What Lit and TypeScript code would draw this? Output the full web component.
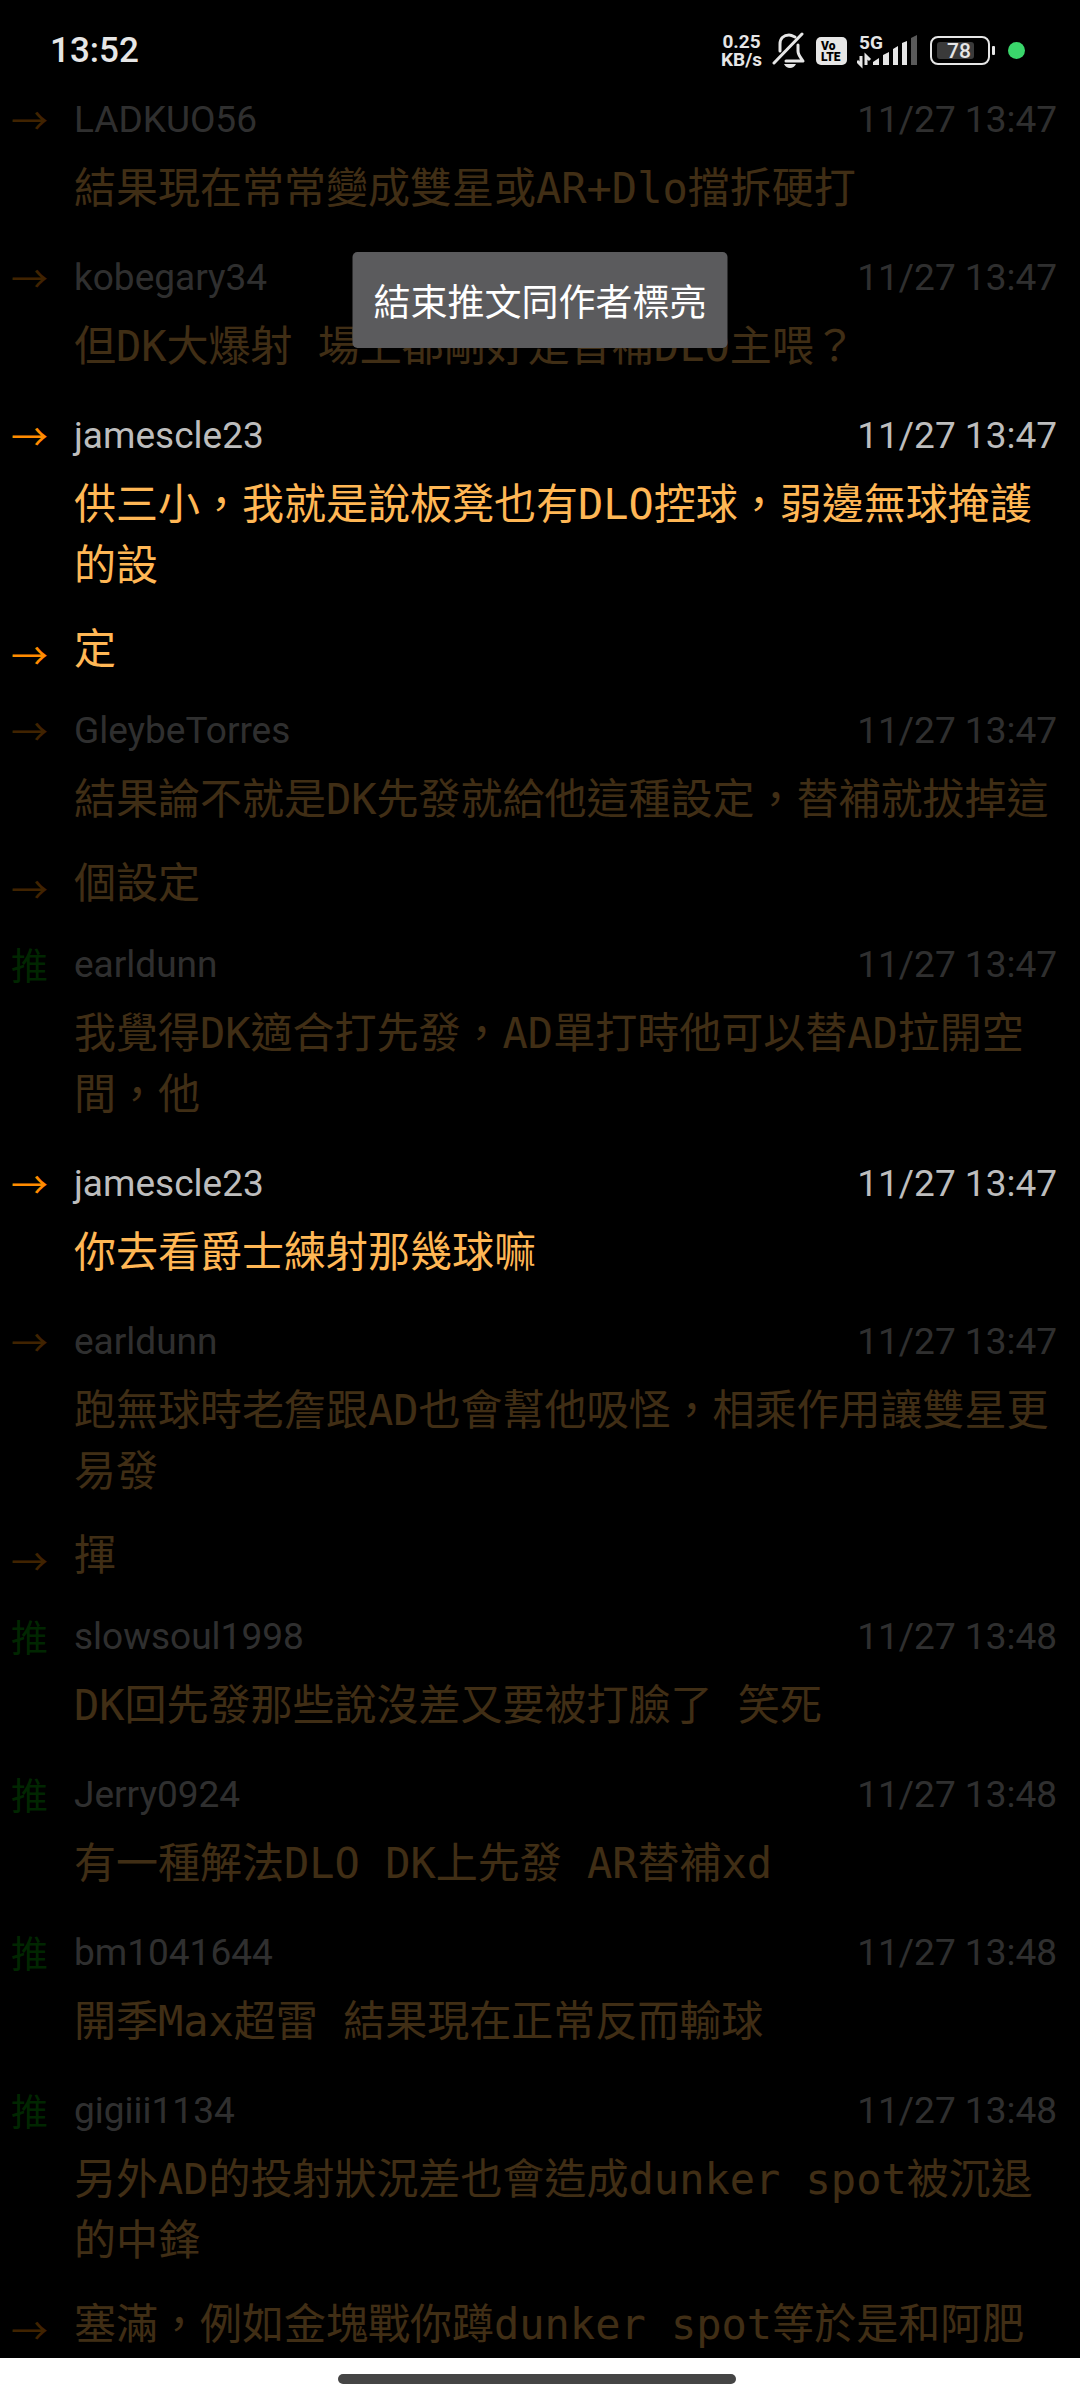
import { LitElement, html, svg, css, nothing } from "lit";
import { customElement, property } from "lit/decorators.js";
import { classMap } from "lit/directives/class-map.js";

type Kind = "reply" | "push";

interface Comment {
  kind: Kind;
  text: string;
  author?: string;
  time?: string;
  highlighted?: boolean;
}

const COMMENTS: Comment[] = [
  { kind: "reply", author: "LADKUO56", time: "11/27 13:47", text: "結果現在常常變成雙星或AR+Dlo擋拆硬打" },
  { kind: "reply", author: "kobegary34", time: "11/27 13:47", text: "但DK大爆射 場上都剛好是替補DLO主喂？" },
  { kind: "reply", author: "jamescle23", time: "11/27 13:47", text: "供三小，我就是說板凳也有DLO控球，弱邊無球掩護的設", highlighted: true },
  { kind: "reply", text: "定", highlighted: true },
  { kind: "reply", author: "GleybeTorres", time: "11/27 13:47", text: "結果論不就是DK先發就給他這種設定，替補就拔掉這" },
  { kind: "reply", text: "個設定" },
  { kind: "push", author: "earldunn", time: "11/27 13:47", text: "我覺得DK適合打先發，AD單打時他可以替AD拉開空間，他" },
  { kind: "reply", author: "jamescle23", time: "11/27 13:47", text: "你去看爵士練射那幾球嘛", highlighted: true },
  { kind: "reply", author: "earldunn", time: "11/27 13:47", text: "跑無球時老詹跟AD也會幫他吸怪，相乘作用讓雙星更易發" },
  { kind: "reply", text: "揮" },
  { kind: "push", author: "slowsoul1998", time: "11/27 13:48", text: "DK回先發那些說沒差又要被打臉了 笑死" },
  { kind: "push", author: "Jerry0924", time: "11/27 13:48", text: "有一種解法DLO DK上先發 AR替補xd" },
  { kind: "push", author: "bm1041644", time: "11/27 13:48", text: "開季Max超雷 結果現在正常反而輸球" },
  { kind: "push", author: "gigiii1134", time: "11/27 13:48", text: "另外AD的投射狀況差也會造成dunker spot被沉退的中鋒" },
  { kind: "reply", text: "塞滿，例如金塊戰你蹲dunker spot等於是和阿肥" },
];

const bellOff = svg`
  <path d="M8 19 V12 C8 6 12 3 17 3 C19 3 21 4 23 5 M26 13 V19 C26 23 29 26 31 29 L14 29" fill="none" stroke="currentColor" stroke-width="3" stroke-linejoin="round" stroke-linecap="round"/>
  <path d="M2 31 L30 2" fill="none" stroke="currentColor" stroke-width="3" stroke-linecap="round"/>
  <path d="M12 32 H24 Q22 36 18 36 Q14 36 12 32 Z" fill="currentColor"/>`;

@customElement("status-bar")
export class StatusBar extends LitElement {
  static styles = css`
    :host {
      display: flex;
      align-items: center;
      justify-content: space-between;
      padding: 29px 55px 5px 50px;
      color: #e6e6e6;
      font-family: Roboto, sans-serif;
    }
    .clock {
      font-size: 35px;
      line-height: 43px;
      font-weight: 500;
    }
    .icons {
      display: flex;
      align-items: center;
      gap: 10px;
    }
    .speed {
      display: flex;
      flex-direction: column;
      font-size: 19px;
      line-height: 18px;
      font-weight: 700;
      text-align: center;
    }
    svg {
      display: block;
      font-family: Roboto, sans-serif;
    }
    .dot {
      width: 17px;
      height: 17px;
      border-radius: 50%;
      background: #3ad66b;
    }
  `;

  render() {
    return html`
      <time class="clock">13:52</time>
      <div class="icons">
        <div class="speed"><span>0.25</span><span>KB/s</span></div>
        <svg width="34" height="38" viewBox="0 0 34 38" aria-hidden="true">${bellOff}</svg>
        <svg width="31" height="28" viewBox="0 0 31 28" aria-hidden="true">
          <rect width="31" height="28" rx="5" fill="currentColor"/>
          <text x="5" y="13" font-size="12" font-weight="900" fill="#000">Vo</text>
          <text x="5" y="24" font-size="12" font-weight="900" fill="#000">LTE</text>
        </svg>
        <svg width="63" height="42" viewBox="0 -4 63 42" aria-hidden="true">
          <text x="2" y="15" font-size="19" font-weight="700" fill="currentColor">5G</text>
          <path d="M4 22 V31 L0 27 M9 31 V22 L13 26" fill="none" stroke="currentColor" stroke-width="3"/>
          <path d="M16 31 V28 L22 24 V31 Z M26 31 V21 L32 18 V31 Z M36 31 V15 L41 12 V31 Z M45 31 V9 L50 7 V31 Z" fill="currentColor"/>
          <path d="M54 31 V4 L60 1 V31 Z" fill="#5a5a5a"/>
        </svg>
        <svg width="68" height="30" viewBox="0 0 68 30" aria-hidden="true">
          <rect x="1" y="1" width="58" height="27" rx="7" fill="none" stroke="currentColor" stroke-width="2"/>
          <rect x="7" y="6" width="37" height="17" rx="3" fill="#3a3a3a"/>
          <rect x="62" y="10" width="3" height="9" rx="1" fill="currentColor"/>
          <text x="17" y="22" font-size="21" font-weight="500" fill="currentColor">78</text>
        </svg>
        <span class="dot"></span>
      </div>
    `;
  }
}

@customElement("comment-row")
export class CommentRow extends LitElement {
  @property({ attribute: false }) comment!: Comment;

  static styles = css`
    :host {
      display: block;
    }
    .row {
      display: grid;
      grid-template-columns: 63px 1fr;
      padding: 0 23px 0 11px;
      opacity: 0.25;
    }
    .row.highlighted {
      opacity: 1;
    }
    .marker {
      padding-top: 15px;
      font-family: "Noto Sans CJK TC", sans-serif;
      font-size: 37px;
      line-height: 54px;
      color: #ff8c00;
    }
    .marker.push {
      color: #009900;
    }
    .body {
      min-width: 0;
      padding: 21px 0 16px;
    }
    .body.continued {
      padding: 7px 0 8px;
    }
    .head {
      display: flex;
      justify-content: space-between;
      padding-bottom: 17px;
      font-family: Roboto, sans-serif;
      font-size: 37px;
      line-height: 43px;
      color: #bdbdbd;
    }
    .text {
      margin: 0;
      font-family: "DejaVu Sans Mono", "Noto Sans CJK TC", monospace;
      font-size: 42px;
      line-height: 61px;
      color: #ffb755;
    }
  `;

  render() {
    const c = this.comment;
    return html`
      <div class=${classMap({ row: true, highlighted: !!c.highlighted })}>
        <span class=${classMap({ marker: true, push: c.kind === "push" })}>${c.kind === "push" ? "推" : "→"}</span>
        <div class=${classMap({ body: true, continued: !c.author })}>
          ${c.author
            ? html`<div class="head"><span>${c.author}</span><time>${c.time}</time></div>`
            : nothing}
          <p class="text">${c.text}</p>
        </div>
      </div>
    `;
  }
}

@customElement("app-root")
export class AppRoot extends LitElement {
  static styles = css`
    :host {
      display: flex;
      flex-direction: column;
      position: relative;
      height: 100vh;
      overflow: hidden;
      background: #000;
    }
    .list {
      flex: 1;
      min-height: 0;
      overflow: hidden;
    }
    .toast {
      position: absolute;
      top: 252px;
      left: 50%;
      transform: translateX(-50%);
      padding: 21px;
      border-radius: 5px;
      background: #5b5b5d;
      color: #fff;
      font-family: "Noto Sans CJK TC", sans-serif;
      font-size: 37px;
      line-height: 54px;
      white-space: nowrap;
    }
    .nav {
      display: flex;
      justify-content: center;
      padding: 16px 6px 16px 0;
      background: #fff;
    }
    .pill {
      width: 37%;
      height: 10px;
      border-radius: 5px;
      background: #454545;
    }
  `;

  render() {
    return html`
      <status-bar></status-bar>
      <main class="list">
        ${COMMENTS.map((c) => html`<comment-row .comment=${c}></comment-row>`)}
      </main>
      <div class="toast" role="status">結束推文同作者標亮</div>
      <div class="nav"><span class="pill"></span></div>
    `;
  }
}
